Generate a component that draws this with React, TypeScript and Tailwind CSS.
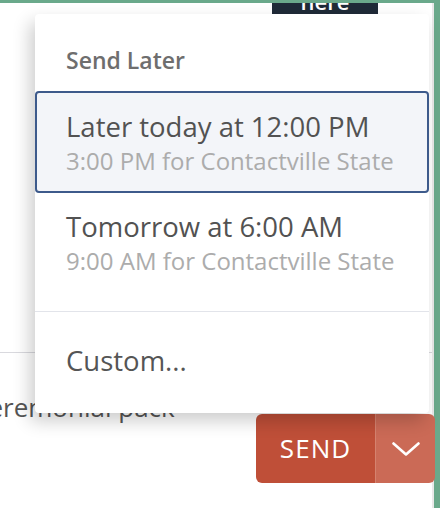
const options = [
  { title: "Later today at 12:00 PM", sub: "3:00 PM for Contactville State", selected: true },
  { title: "Tomorrow at 6:00 AM", sub: "9:00 AM for Contactville State", selected: false },
];

export default function App() {
  return (
    <div
      className="relative w-[440px] h-[508px] overflow-hidden bg-[#6aa98b] pt-[3px] pr-[6px]"
      style={{ fontFamily: '"Open Sans", "Noto Sans", sans-serif' }}
    >
      {/* page underneath */}
      <div className="h-full bg-white border-r-2 border-[#e9e9e9] flex flex-col">
        <div className="flex justify-end pr-[54px]">
          <div className="w-[106px] h-[11px] bg-[#1f2b38] overflow-hidden flex justify-center">
            <span className="text-white text-[22px] leading-none font-semibold -mt-[13px]">here</span>
          </div>
        </div>
        <div className="mt-[338px] border-t border-[#d9d9de]" />
        <div className="flex items-start">
          <span className="mt-[37px] -ml-[24px] text-[26px] leading-[34px] text-[#555] whitespace-nowrap">
            ceremonial pack
          </span>
          <div className="ml-auto -mr-[3px] mt-[61px] flex h-[69px] rounded-[6px] overflow-hidden">
            <div className="w-[119px] bg-[#bf4f38] flex items-center justify-center text-white text-[26px] tracking-[0.04em]">
              SEND
            </div>
            <div className="w-[60px] bg-[#cb6a56] border-l border-[#d5826f] flex items-center justify-center">
              <svg width="28" height="14" viewBox="0 0 28 14" fill="none" stroke="white" strokeWidth="2.6" strokeLinecap="round" strokeLinejoin="round">
                <polyline points="1.5,1.5 14,12.5 26.5,1.5" />
              </svg>
            </div>
          </div>
        </div>
      </div>

      {/* send later dropdown */}
      <div className="absolute left-[35px] top-[14px] w-[394px] bg-white rounded-[4px] shadow-[-5px_8px_18px_rgba(0,0,0,0.2)] flex flex-col">
        <div className="px-[31px] pt-[31px] pb-[16px] text-[23px] leading-[30px] font-semibold text-[#6e6e6e]">
          Send Later
        </div>
        {options.map((o) => (
          <div
            key={o.title}
            className={
              o.selected
                ? "h-[102px] border-2 border-[#3d5a8b] bg-[#f3f5f9] rounded-[4px] px-[29px] pt-[17px]"
                : "h-[118px] px-[31px] pt-[17px]"
            }
          >
            <div className="text-[27.5px] leading-[34px] text-[#525252]">{o.title}</div>
            <div className="mt-[2px] text-[24px] leading-[30px] text-[#acacac]">{o.sub}</div>
          </div>
        ))}
        <div className="border-t border-[#e2e4ea]" />
        <div className="px-[31px] pt-[32px] pb-[35px] text-[27.5px] leading-[34px] text-[#555]">Custom...</div>
      </div>
    </div>
  );
}
